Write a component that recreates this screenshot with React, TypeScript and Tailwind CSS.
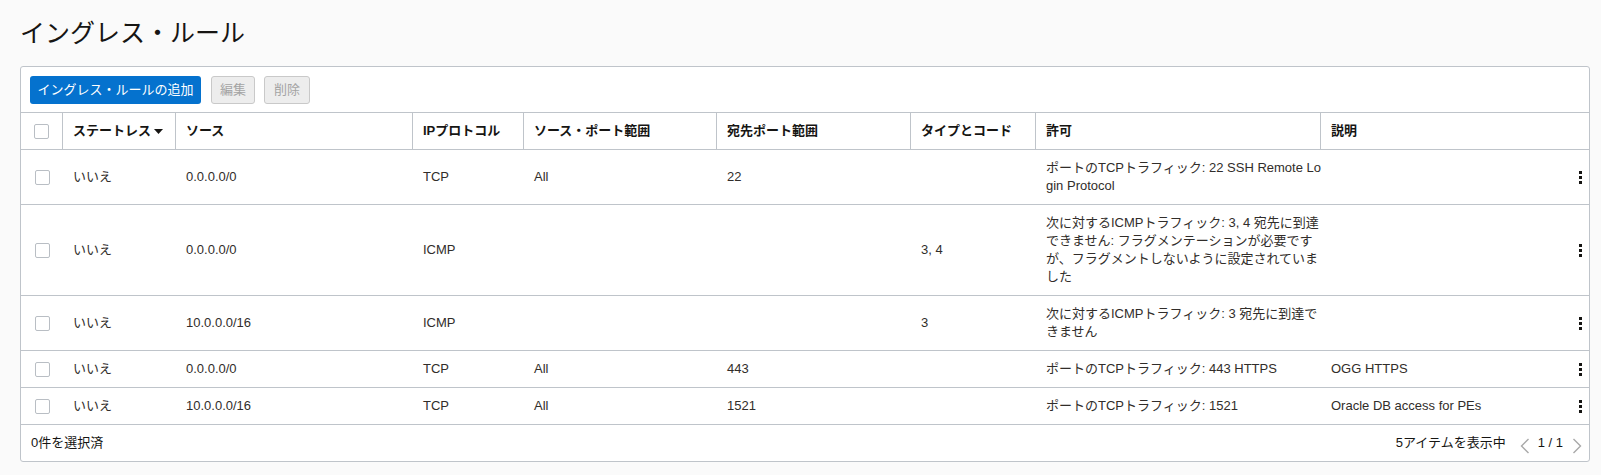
import React from "react";

type Row = {
  stateless: string;
  source: string;
  proto: string;
  srcPort: string;
  dstPort: string;
  typeCode: string;
  allow: string[];
  desc: string;
};

const rows: Row[] = [
  {
    stateless: "いいえ",
    source: "0.0.0.0/0",
    proto: "TCP",
    srcPort: "All",
    dstPort: "22",
    typeCode: "",
    allow: ["ポートのTCPトラフィック: 22 SSH Remote Lo", "gin Protocol"],
    desc: "",
  },
  {
    stateless: "いいえ",
    source: "0.0.0.0/0",
    proto: "ICMP",
    srcPort: "",
    dstPort: "",
    typeCode: "3, 4",
    allow: [
      "次に対するICMPトラフィック: 3, 4 宛先に到達",
      "できません: フラグメンテーションが必要です",
      "が、フラグメントしないように設定されていま",
      "した",
    ],
    desc: "",
  },
  {
    stateless: "いいえ",
    source: "10.0.0.0/16",
    proto: "ICMP",
    srcPort: "",
    dstPort: "",
    typeCode: "3",
    allow: ["次に対するICMPトラフィック: 3 宛先に到達で", "きません"],
    desc: "",
  },
  {
    stateless: "いいえ",
    source: "0.0.0.0/0",
    proto: "TCP",
    srcPort: "All",
    dstPort: "443",
    typeCode: "",
    allow: ["ポートのTCPトラフィック: 443 HTTPS"],
    desc: "OGG HTTPS",
  },
  {
    stateless: "いいえ",
    source: "10.0.0.0/16",
    proto: "TCP",
    srcPort: "All",
    dstPort: "1521",
    typeCode: "",
    allow: ["ポートのTCPトラフィック: 1521"],
    desc: "Oracle DB access for PEs",
  },
];

function Checkbox() {
  return (
    <span className="block w-[15px] h-[15px] rounded-[2px] border border-[#b9bec4] bg-white" />
  );
}

function Kebab() {
  return (
    <span className="flex flex-col gap-[2px]">
      <span className="block w-[3px] h-[3px] bg-[#161513]" />
      <span className="block w-[3px] h-[3px] bg-[#161513]" />
      <span className="block w-[3px] h-[3px] bg-[#161513]" />
    </span>
  );
}

function Chevron({ dir }: { dir: "left" | "right" }) {
  return (
    <svg width="10" height="16" viewBox="0 0 10 16" className="block">
      {dir === "left" ? (
        <polyline points="8.5,1 1.5,8 8.5,15" fill="none" stroke="#a9a9a9" strokeWidth="1.4" />
      ) : (
        <polyline points="1.5,1 8.5,8 1.5,15" fill="none" stroke="#a9a9a9" strokeWidth="1.4" />
      )}
    </svg>
  );
}

export default function App() {
  return (
    <div className="min-h-screen bg-[#fafafa] pl-[20px] pr-[11px] font-['Liberation_Sans','Noto_Sans_CJK_JP',sans-serif] text-[#161513]">
      <h1 className="pt-[17px] pb-[17px] text-[25px] leading-[32px] font-normal text-[#161513]">
        イングレス・ルール
      </h1>
      <div className="w-[1570px] rounded-[3px] border border-[#bfc4ca] bg-white">
        {/* toolbar */}
        <div className="flex items-center gap-[9px] pl-[9px] pt-[9px] pb-[8px]">
          <button className="h-[28px] w-[171px] rounded-[3px] bg-[#0572ce] text-[13px] text-white leading-[28px]">
            イングレス・ルールの追加
          </button>
          <button className="ml-[1px] h-[28px] w-[44px] rounded-[3px] border border-[#c9c9c9] bg-[#ededed] text-[13px] text-[#a4a4a4]">
            編集
          </button>
          <button className="h-[28px] w-[46px] rounded-[3px] border border-[#c9c9c9] bg-[#ededed] text-[13px] text-[#a4a4a4]">
            削除
          </button>
        </div>

        {/* header */}
        <div className="flex border-t border-b border-[#bfc4ca] text-[13px] leading-[18px] font-bold text-[#161513]">
          <div className="w-[42px] shrink-0 border-r border-[#bfc4ca] flex items-center justify-center">
            <Checkbox />
          </div>
          <div className="w-[113px] shrink-0 border-r border-[#bfc4ca] px-[10px] py-[9px] flex items-center">
            ステートレス
            <svg width="9" height="5" viewBox="0 0 9 5" className="ml-[3px]">
              <polygon points="0,0 9,0 4.5,5" fill="#161513" />
            </svg>
          </div>
          <div className="w-[237px] shrink-0 border-r border-[#bfc4ca] px-[10px] py-[9px]">ソース</div>
          <div className="w-[111px] shrink-0 border-r border-[#bfc4ca] px-[10px] py-[9px]">IPプロトコル</div>
          <div className="w-[193px] shrink-0 border-r border-[#bfc4ca] px-[10px] py-[9px]">ソース・ポート範囲</div>
          <div className="w-[194px] shrink-0 border-r border-[#bfc4ca] px-[10px] py-[9px]">宛先ポート範囲</div>
          <div className="w-[125px] shrink-0 border-r border-[#bfc4ca] px-[10px] py-[9px]">タイプとコード</div>
          <div className="w-[285px] shrink-0 border-r border-[#bfc4ca] px-[10px] py-[9px]">許可</div>
          <div className="flex-1 px-[10px] py-[9px]">説明</div>
        </div>

        {/* body */}
        {rows.map((r, i) => (
          <div
            key={i}
            className="flex items-center border-b border-[#bfc4ca] text-[13px] leading-[18px] text-[#312d2a]"
          >
            <div className="w-[42px] shrink-0 flex items-center justify-center">
              <Checkbox />
            </div>
            <div className="w-[113px] shrink-0 px-[10px]">{r.stateless}</div>
            <div className="w-[237px] shrink-0 px-[10px]">{r.source}</div>
            <div className="w-[111px] shrink-0 px-[10px]">{r.proto}</div>
            <div className="w-[193px] shrink-0 px-[10px]">{r.srcPort}</div>
            <div className="w-[194px] shrink-0 px-[10px]">{r.dstPort}</div>
            <div className="w-[125px] shrink-0 px-[10px]">{r.typeCode}</div>
            <div className="w-[285px] shrink-0 px-[10px] py-[9px]">
              {r.allow.map((l, j) => (
                <div key={j} className="whitespace-nowrap">
                  {l}
                </div>
              ))}
            </div>
            <div className="flex-1 px-[10px]">{r.desc}</div>
            <div className="w-[30px] shrink-0 flex justify-end pr-[7px]">
              <Kebab />
            </div>
          </div>
        ))}

        {/* footer */}
        <div className="flex items-center h-[36px] text-[13px] text-[#161513] pl-[10px] pr-[7px]">
          <span>0件を選択済</span>
          <div className="ml-auto flex items-center">
            <span>5アイテムを表示中</span>
            <span className="ml-[14px] mt-[6px]">
              <Chevron dir="left" />
            </span>
            <span className="ml-[8px]">1 / 1</span>
            <span className="ml-[9px] mt-[6px]">
              <Chevron dir="right" />
            </span>
          </div>
        </div>
      </div>
    </div>
  );
}
